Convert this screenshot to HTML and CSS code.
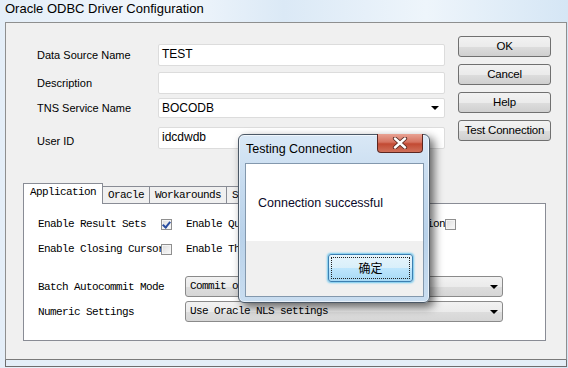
FILE: index.html
```html
<!DOCTYPE html>
<html>

<head>
    <meta charset="UTF-8">
    <title>Oracle ODBC Driver Configuration</title>
    <link rel="stylesheet" href="styles.css">
</head>

<body>
    <div class="titlebar">Oracle ODBC Driver Configuration</div>

    <div class="window">
        <div class="top">
            <div class="fields">
                <div class="row r1">
                    <span class="label">Data Source Name</span>
                    <div class="input">TEST</div>
                </div>
                <div class="row r2">
                    <span class="label">Description</span>
                    <div class="input"></div>
                </div>
                <div class="row r3">
                    <span class="label">TNS Service Name</span>
                    <div class="input combo">BOCODB<span class="arrow"></span></div>
                </div>
                <div class="row r4">
                    <span class="label">User ID</span>
                    <div class="input">idcdwdb</div>
                </div>
            </div>
            <div class="buttons">
                <div class="btn">OK</div>
                <div class="btn">Cancel</div>
                <div class="btn">Help</div>
                <div class="btn">Test Connection</div>
            </div>
        </div>

        <div class="tabs">
            <div class="tab active">Application</div>
            <div class="tab">Oracle</div>
            <div class="tab">Workarounds</div>
            <div class="tab">SQLServer Migration</div>
        </div>
        <div class="panel">
            <div class="opt">
                <span class="olabel">Enable Result Sets</span>
                <span class="check on"></span>
                <span class="olabel mid">Enable Query Timeout</span>
                <span class="check on"></span>
                <span class="olabel last">Read-Only Connection</span>
                <span class="check"></span>
            </div>
            <div class="opt">
                <span class="olabel">Enable Closing Cursors</span>
                <span class="check"></span>
                <span class="olabel mid">Enable Thread Safety</span>
                <span class="check on"></span>
            </div>
            <div class="sel s1">
                <span class="olabel">Batch Autocommit Mode</span>
                <div class="dropdown">Commit only if all statements succeed<span class="arrow"></span></div>
            </div>
            <div class="sel s2">
                <span class="olabel">Numeric Settings</span>
                <div class="dropdown">Use Oracle NLS settings<span class="arrow"></span></div>
            </div>
        </div>
    </div>

    <div class="dialog">
        <div class="dlg-title">
            <span>Testing Connection</span>
            <div class="close">
                <svg width="16" height="12" viewBox="0 0 16 12">
                    <path d="M3 1.5 L13 10.5 M13 1.5 L3 10.5" stroke="#5a2a22" stroke-width="4.2" stroke-linecap="round" />
                    <path d="M3 1.5 L13 10.5 M13 1.5 L3 10.5" stroke="#ffffff" stroke-width="2.4" stroke-linecap="round" />
                </svg>
            </div>
        </div>
        <div class="dlg-client">
            <div class="dlg-msg">Connection successful</div>
            <div class="dlg-foot">
                <div class="okbtn"><span>确定</span></div>
            </div>
        </div>
    </div>
</body>

</html>
```

FILE: styles.css
```css
html,
body {
    margin: 0;
    height: 100%;
    overflow: hidden;
}

body {
    position: relative;
    font-family: "Liberation Sans", Arial, sans-serif;
    font-size: 11px;
    color: #000;
    background: linear-gradient(90deg, #e4eef8 0%, #f2f7fc 30%, #dbe9f6 50%, #eef5fb 75%, #d5e6f5 100%);
}

/* barra de título (vidro aero) */
.titlebar {
    height: 22px;
    padding-left: 5px;
    font-size: 13px;
    line-height: 17px;
    color: #000;
}

.window {
    margin: 0 1px 0 5px;
    height: 336px;
    border: solid 1px #8e8f8f;
    background: #f0f0f0;
    border-bottom-color: #7a7a7a;
    box-shadow: 0 7px 0 -1px #e4eef7, 0 7px 0 0 #6d6d6d;
}

.top {
    display: flex;
}

.fields {
    margin-top: 21px;
    padding-left: 31px;
}

.row {
    display: flex;
    align-items: center;
}

.label {
    width: 121px;
}

.input {
    position: relative;
    width: 282px;
    height: 20px;
    border: solid 1px #dcdcdc;
    border-radius: 2px;
    background: #fff;
    padding-left: 3px;
    line-height: 19px;
    font-size: 12px;
    box-sizing: content-box;
}

.r2 {
    margin-top: 6px;
}

.r3 {
    margin-top: 4px;
}

.r3 .input {
    height: 18px;
    line-height: 18px;
}

.r4 {
    margin-top: 9px;
}

.r4 .label {
    padding-top: 5px;
}

.arrow {
    position: absolute;
    right: 5px;
    top: 50%;
    margin-top: -2px;
    border-left: 4px solid transparent;
    border-right: 4px solid transparent;
    border-top: 4px solid #000;
}

.buttons {
    margin: 13px 15px 0 auto;
    display: flex;
    flex-direction: column;
    gap: 7px;
}

.btn {
    width: 91px;
    height: 19px;
    border: solid 1px #707070;
    border-radius: 3px;
    background: linear-gradient(#f2f2f2 0%, #ebebeb 50%, #dddddd 51%, #cfcfcf 100%);
    text-align: center;
    line-height: 19px;
    font-size: 11.5px;
    letter-spacing: -0.2px;
}

/* abas */
.tabs {
    display: flex;
    margin: 34px 0 0 17px;
    height: 20px;
    align-items: flex-end;
    font-family: "Liberation Mono", monospace;
    font-size: 11px;
    letter-spacing: -0.6px;
}

.tab {
    height: 16px;
    padding: 0 5px;
    border: solid 1px #898c95;
    border-bottom: none;
    background: #f0f0f0;
    line-height: 17px;
    margin-left: -1px;
}

.tab.active {
    background: #fff;
    position: relative;
    z-index: 1;
    margin-left: 0;
    padding: 0 6px;
    line-height: 17px;
    margin-bottom: -1px;
    height: 20px;
}

.panel {
    margin: 0 20px 0 17px;
    height: 136px;
    border: solid 1px #898c95;
    background: #fff;
    padding-left: 14px;
    font-family: "Liberation Mono", monospace;
    font-size: 11px;
    letter-spacing: -0.6px;
}

.opt {
    display: flex;
    align-items: center;
    height: 12px;
    margin-top: 14px;
    white-space: nowrap;
}

.opt + .opt {
    margin-top: 13px;
}

.olabel {
    width: 123px;
    white-space: nowrap;
    overflow: visible;
}

.olabel.mid {
    margin-left: 14px;
    width: 128px;
}

.olabel.last {
    width: 120px;
}

.check {
    width: 9px;
    height: 9px;
    border: solid 1px #8f8f8f;
    background: linear-gradient(135deg, #dcdcdc, #fbfbfb);
    flex: none;
    position: relative;
    box-shadow: inset 0 0 0 1px #f4f4f4;
}

.check.on::after {
    content: "";
    position: absolute;
    left: 2px;
    top: 0;
    width: 3px;
    height: 6px;
    border: solid #2a4ea0;
    border-width: 0 2px 2px 0;
    transform: rotate(40deg);
}

.sel {
    display: flex;
    align-items: center;
}

.s1 {
    margin-top: 21px;
}

.s2 {
    margin-top: 4px;
}

.sel .olabel {
    width: 147px;
}

.dropdown {
    position: relative;
    width: 312px;
    height: 19px;
    border: solid 1px #8a8a8a;
    border-radius: 3px;
    background: linear-gradient(#f2f2f2 0%, #ebebeb 50%, #dddddd 51%, #d6d6d6 100%);
    padding-left: 4px;
    line-height: 19px;
}

.dropdown .arrow {
    right: 4px;
}

/* janela de diálogo sobreposta */
.dialog {
    position: absolute;
    left: 238px;
    top: 134px;
    width: 190px;
    height: 167px;
    border: solid 1px #4b5866;
    border-radius: 6px;
    background: linear-gradient(180deg, #d9e8f6 0%, #c6dbef 30%, #b9d2ea 60%, #c9ddf0 100%);
    box-shadow: 4px 4px 10px rgba(0, 0, 0, 0.6), inset 0 0 0 1px rgba(255, 255, 255, 0.6);
}

.dlg-title {
    display: flex;
    height: 28px;
    padding-left: 7px;
    font-size: 12.5px;
    line-height: 29px;
}

.close {
    margin: -1px 6px 0 auto;
    width: 44px;
    height: 18px;
    border: solid 1px #5b2620;
    border-top: none;
    border-radius: 0 0 4px 4px;
    background: linear-gradient(#e8a293 0%, #d67360 45%, #c24a33 55%, #d0705a 100%);
    display: flex;
    justify-content: center;
    align-items: center;
}

.dlg-client {
    margin: 0 5px 0 6px;
    height: 132px;
    border: solid 1px #8398ad;
    background: #f0f0f0;
}

.dlg-msg {
    height: 77px;
    background: #fff;
    padding-left: 12px;
    line-height: 78px;
    font-size: 12.5px;
    color: #0a0a2a;
}

.dlg-foot {
    display: flex;
    justify-content: flex-end;
    padding: 13px 10px 0 0;
}

.okbtn {
    width: 85px;
    height: 28px;
    border: solid 1px #3c7fb1;
    border-radius: 3px;
    background: linear-gradient(#e5f4fc 0%, #d9effa 50%, #bee6fd 51%, #a7d9f5 100%);
    box-shadow: 0 0 2px 1px #6fc8ef;
    display: flex;
    padding: 2px;
    box-sizing: border-box;
}

.okbtn span {
    flex: 1;
    border: dotted 1px #222;
    text-align: center;
    line-height: 20px;
    font-family: "Noto Sans CJK SC", sans-serif;
    font-size: 12px;
}
```
